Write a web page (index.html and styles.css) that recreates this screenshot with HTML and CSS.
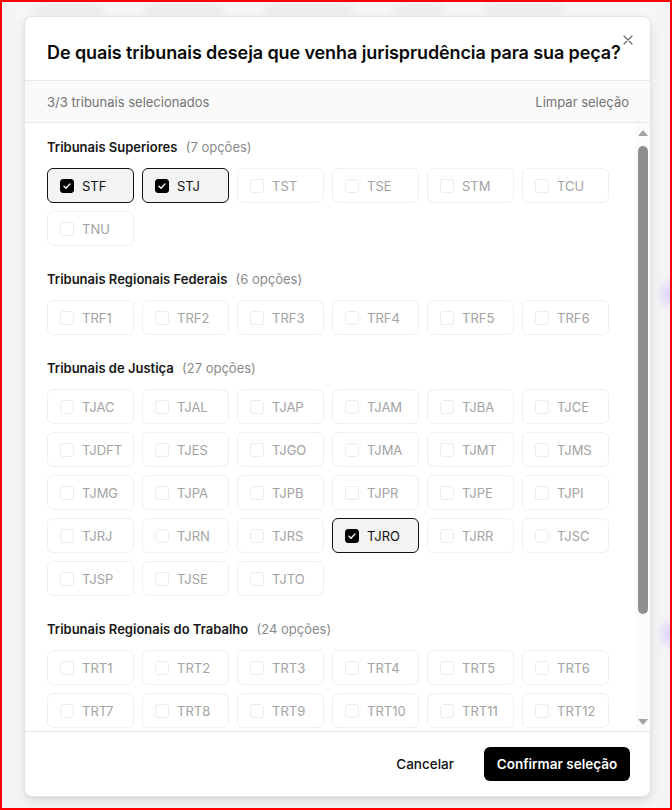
FILE: index.html
```html
<!DOCTYPE html>
<html lang="pt-BR">
<head>
<meta charset="utf-8">
<link rel="stylesheet" href="styles.css">
</head>
<body>
<div class="frame">
  <div class="backdrop-lines">
    <span class="bl w1"></span><span class="bl w2"></span><span class="bl w3"></span><span class="bl w4"></span><span class="bl w5"></span>
  </div>
  <div class="modal">
    <button class="close" aria-label="Fechar">
      <svg width="10" height="10" viewBox="0 0 10 10"><path d="M1 1L9 9M9 1L1 9" stroke="#6b6b6b" stroke-width="1.2" stroke-linecap="round"/></svg>
    </button>
    <div class="header">
      <h2 class="title">De quais tribunais deseja que venha jurisprudência para sua peça?</h2>
    </div>
    <div class="subheader">
      <span class="count">3/3 tribunais selecionados</span>
      <span class="clear">Limpar seleção</span>
    </div>
    <div class="body">
      <div class="scroll">
        <section class="group">
          <h3 class="group-title">Tribunais Superiores <span class="opts">(7 opções)</span></h3>
          <div class="grid">
            <label class="item on"><span class="cb"></span>STF</label>
            <label class="item on"><span class="cb"></span>STJ</label>
            <label class="item"><span class="cb"></span>TST</label>
            <label class="item"><span class="cb"></span>TSE</label>
            <label class="item"><span class="cb"></span>STM</label>
            <label class="item"><span class="cb"></span>TCU</label>
            <label class="item"><span class="cb"></span>TNU</label>
          </div>
        </section>
        <section class="group">
          <h3 class="group-title">Tribunais Regionais Federais <span class="opts">(6 opções)</span></h3>
          <div class="grid">
            <label class="item"><span class="cb"></span>TRF1</label>
            <label class="item"><span class="cb"></span>TRF2</label>
            <label class="item"><span class="cb"></span>TRF3</label>
            <label class="item"><span class="cb"></span>TRF4</label>
            <label class="item"><span class="cb"></span>TRF5</label>
            <label class="item"><span class="cb"></span>TRF6</label>
          </div>
        </section>
        <section class="group">
          <h3 class="group-title">Tribunais de Justiça <span class="opts">(27 opções)</span></h3>
          <div class="grid">
            <label class="item"><span class="cb"></span>TJAC</label>
            <label class="item"><span class="cb"></span>TJAL</label>
            <label class="item"><span class="cb"></span>TJAP</label>
            <label class="item"><span class="cb"></span>TJAM</label>
            <label class="item"><span class="cb"></span>TJBA</label>
            <label class="item"><span class="cb"></span>TJCE</label>
            <label class="item"><span class="cb"></span>TJDFT</label>
            <label class="item"><span class="cb"></span>TJES</label>
            <label class="item"><span class="cb"></span>TJGO</label>
            <label class="item"><span class="cb"></span>TJMA</label>
            <label class="item"><span class="cb"></span>TJMT</label>
            <label class="item"><span class="cb"></span>TJMS</label>
            <label class="item"><span class="cb"></span>TJMG</label>
            <label class="item"><span class="cb"></span>TJPA</label>
            <label class="item"><span class="cb"></span>TJPB</label>
            <label class="item"><span class="cb"></span>TJPR</label>
            <label class="item"><span class="cb"></span>TJPE</label>
            <label class="item"><span class="cb"></span>TJPI</label>
            <label class="item"><span class="cb"></span>TJRJ</label>
            <label class="item"><span class="cb"></span>TJRN</label>
            <label class="item"><span class="cb"></span>TJRS</label>
            <label class="item on"><span class="cb"></span>TJRO</label>
            <label class="item"><span class="cb"></span>TJRR</label>
            <label class="item"><span class="cb"></span>TJSC</label>
            <label class="item"><span class="cb"></span>TJSP</label>
            <label class="item"><span class="cb"></span>TJSE</label>
            <label class="item"><span class="cb"></span>TJTO</label>
          </div>
        </section>
        <section class="group">
          <h3 class="group-title">Tribunais Regionais do Trabalho <span class="opts">(24 opções)</span></h3>
          <div class="grid">
            <label class="item"><span class="cb"></span>TRT1</label>
            <label class="item"><span class="cb"></span>TRT2</label>
            <label class="item"><span class="cb"></span>TRT3</label>
            <label class="item"><span class="cb"></span>TRT4</label>
            <label class="item"><span class="cb"></span>TRT5</label>
            <label class="item"><span class="cb"></span>TRT6</label>
            <label class="item"><span class="cb"></span>TRT7</label>
            <label class="item"><span class="cb"></span>TRT8</label>
            <label class="item"><span class="cb"></span>TRT9</label>
            <label class="item"><span class="cb"></span>TRT10</label>
            <label class="item"><span class="cb"></span>TRT11</label>
            <label class="item"><span class="cb"></span>TRT12</label>
          </div>
        </section>
      </div>
      <div class="scrollbar">
        <span class="arrow up"></span>
        <span class="thumb-track"><span class="thumb"></span></span>
        <span class="arrow down"></span>
      </div>
    </div>
    <div class="footer">
      <button class="btn-cancel">Cancelar</button>
      <button class="btn-confirm">Confirmar seleção</button>
    </div>
  </div>
</div>
</body>
</html>
```

FILE: styles.css
```css
* { box-sizing: border-box; }
html, body { margin: 0; padding: 0; }
body {
  font-family: Inter, "Noto Sans", "Liberation Sans", sans-serif;
  color: #111;
}
.frame {
  width: 672px;
  height: 810px;
  border: 2px solid #ff0000;
  background:
    radial-gradient(ellipse 14px 18px at 668px 292px, rgba(200,180,255,0.55), rgba(200,180,255,0) 100%),
    radial-gradient(ellipse 14px 18px at 668px 632px, rgba(200,180,255,0.55), rgba(200,180,255,0) 100%),
    linear-gradient(to right, #f4f4f5 0, #f7f7f8 22px, #f7f7f8 650px, #f3f3f5 100%);
  padding: 14px 0 0 22px;
  overflow: hidden;
  display: flex;
  flex-direction: column;
}
.backdrop-lines {
  height: 0;
  display: flex;
  gap: 40px;
  margin-left: 10px;
  transform: translateY(-10px);
}
.bl {
  display: block;
  height: 8px;
  background: #e6e6e8;
  filter: blur(4px);
  border-radius: 4px;
}
.w1 { width: 70px; } .w2 { width: 80px; } .w3 { width: 90px; } .w4 { width: 50px; } .w5 { width: 80px; }

.modal {
  position: relative;
  width: 627px;
  height: 781px;
  background: #fff;
  border: 1px solid #e4e4e7;
  border-radius: 8px;
  box-shadow: 0 6px 14px rgba(0,0,0,0.10), 0 1px 3px rgba(0,0,0,0.05);
  display: flex;
  flex-direction: column;
  overflow: hidden;
}
.close {
  position: absolute;
  top: 17px;
  right: 16px;
  width: 12px;
  height: 12px;
  padding: 0;
  border: 0;
  background: none;
  display: flex;
  align-items: center;
  justify-content: center;
}
.header {
  padding: 24px 22px 15px;
  border-bottom: 1px solid #e8e8ea;
}
.title {
  margin: 0;
  font-size: 18px;
  line-height: 24px;
  font-weight: 600;
  color: #0a0a0a;
  letter-spacing: -0.1px;
}
.subheader {
  height: 42px;
  background: #fafafa;
  border-bottom: 1px solid #e8e8ea;
  padding: 0 21px 0 22px;
  display: flex;
  align-items: center;
  justify-content: space-between;
  font-size: 13px;
  color: #737373;
}
.body {
  flex: 1;
  min-height: 0;
  display: flex;
}
.scroll {
  flex: 1;
  min-width: 0;
  overflow: hidden;
  padding: 15px 26px 0 22px;
}
.group + .group { margin-top: 24px; }
.group-title {
  margin: 0 0 12px;
  font-size: 13px;
  line-height: 18px;
  font-weight: 600;
  color: #171717;
}
.opts {
  font-weight: 400;
  color: #8a8a8a;
  margin-left: 5px;
}
.grid {
  display: grid;
  grid-template-columns: repeat(6, 1fr);
  gap: 8px;
}
.item {
  height: 35px;
  border: 1px solid #f0f0f1;
  border-radius: 6px;
  display: flex;
  align-items: center;
  padding-left: 12px;
  gap: 8px;
  font-size: 13px;
  color: #a3a3a3;
  background: #fff;
}
.item .cb {
  width: 14px;
  height: 14px;
  border: 1px solid #ececee;
  border-radius: 3px;
  background: #fff;
  flex: none;
}
.item.on {
  background: #f3f3f3;
  border-color: #111;
  color: #111;
}
.item.on .cb {
  border-color: #000;
  background: #000 url("data:image/svg+xml;utf8,<svg xmlns='http://www.w3.org/2000/svg' width='14' height='14' viewBox='0 0 14 14'><path d='M4 7.3l2 2 4-4.4' fill='none' stroke='white' stroke-width='1.4' stroke-linecap='round' stroke-linejoin='round'/></svg>") center/14px 14px no-repeat;
}
.scrollbar {
  width: 15px;
  flex: none;
  background: #fbfbfb;
  display: flex;
  flex-direction: column;
  align-items: center;
  padding: 7px 0 6px;
}
.arrow {
  width: 0;
  height: 0;
  border-left: 5px solid transparent;
  border-right: 5px solid transparent;
  flex: none;
}
.arrow.up { border-bottom: 6px solid #a3a3a3; }
.arrow.down { border-top: 6px solid #a3a3a3; }
.thumb-track {
  flex: 1;
  width: 100%;
  display: flex;
  justify-content: center;
  padding-top: 10px;
}
.thumb {
  width: 10px;
  height: 468px;
  background: #8f8f8f;
  border-radius: 5px;
}
.footer {
  height: 65px;
  border-top: 1px solid #e8e8ea;
  display: flex;
  align-items: center;
  justify-content: flex-end;
  gap: 14px;
  padding: 0 20px 0 0;
}
.btn-cancel, .btn-confirm {
  font-family: inherit;
  font-size: 13.5px;
  font-weight: 500;
  border: 0;
  cursor: pointer;
  line-height: 18px;
}
.btn-cancel {
  background: none;
  color: #111;
  padding: 0 16px;
  height: 34px;
}
.btn-confirm {
  background: #000;
  color: #fff;
  height: 34px;
  width: 146px;
  border-radius: 6px;
  font-weight: 600;
}
```
